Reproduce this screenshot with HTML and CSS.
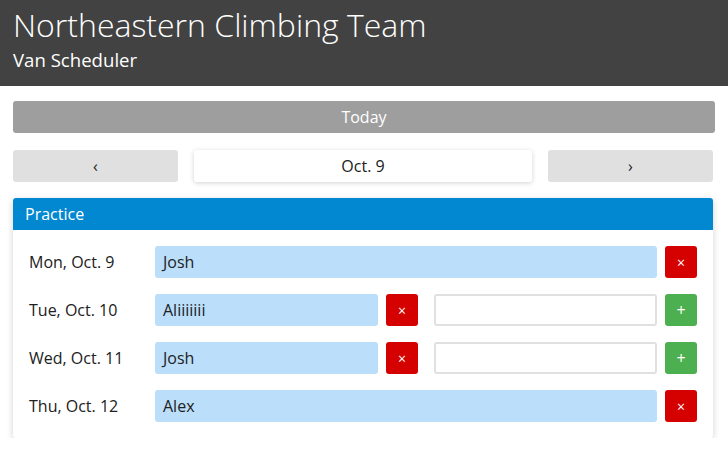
FILE: index.html
```html
<!DOCTYPE html>
<html>
<head>
<meta charset="utf-8">
<link rel="stylesheet" href="styles.css">
</head>
<body>
<header class="header">
  <h1 class="title">Northeastern Climbing Team</h1>
  <div class="subtitle">Van Scheduler</div>
</header>
<main class="main">
  <button class="today">Today</button>
  <div class="nav">
    <button class="nav-btn">‹</button>
    <div class="date">Oct. 9</div>
    <button class="nav-btn">›</button>
  </div>
  <section class="card">
    <div class="card-head">Practice</div>
    <div class="card-body">
      <div class="row">
        <div class="day">Mon, Oct. 9</div>
        <div class="slots">
          <div class="name">Josh</div>
          <button class="btn red">×</button>
        </div>
      </div>
      <div class="row">
        <div class="day">Tue, Oct. 10</div>
        <div class="slots">
          <div class="name">Aliiiiiii</div>
          <button class="btn red">×</button>
          <div class="empty"></div>
          <button class="btn green">+</button>
        </div>
      </div>
      <div class="row">
        <div class="day">Wed, Oct. 11</div>
        <div class="slots">
          <div class="name">Josh</div>
          <button class="btn red">×</button>
          <div class="empty"></div>
          <button class="btn green">+</button>
        </div>
      </div>
      <div class="row">
        <div class="day">Thu, Oct. 12</div>
        <div class="slots">
          <div class="name">Alex</div>
          <button class="btn red">×</button>
        </div>
      </div>
    </div>
  </section>
</main>
</body>
</html>
```
FILE: styles.css
```css
* { box-sizing: border-box; }
body {
  margin: 0;
  font-family: "Open Sans", sans-serif;
  background: #fff;
  color: #212121;
}
.header {
  background: #424242;
  color: #fff;
  height: 86px;
  padding: 4px 13px 0;
}
.title {
  margin: 0;
  font-weight: 300;
  font-size: 32px;
  line-height: 42px;
}
.subtitle {
  font-size: 18.6px;
  line-height: 28px;
}
.main {
  padding: 15px 13px 0 13px;
  display: flex;
  flex-direction: column;
}
button {
  font-family: inherit;
  border: none;
  cursor: pointer;
}
.today {
  height: 32px;
  width: 702px;
  background: #9e9e9e;
  color: #fff;
  font-size: 16px;
  border-radius: 3px;
}
.nav {
  margin-top: 17px;
  display: flex;
  gap: 16px;
  width: 700px;
}
.nav-btn {
  width: 165px;
  height: 32px;
  background: #e0e0e0;
  color: #212121;
  font-size: 16px;
  border-radius: 3px;
}
.date {
  flex: 1;
  height: 32px;
  background: #fff;
  border-radius: 3px;
  box-shadow: 0 1px 5px rgba(0,0,0,0.18);
  text-align: center;
  font-size: 16px;
  line-height: 32px;
}
.card {
  margin-top: 16px;
  width: 700px;
  border-radius: 3px;
  box-shadow: 0 2px 7px rgba(0,0,0,0.18);
  overflow: hidden;
}
.card-head {
  background: #0288d1;
  color: #fff;
  height: 32px;
  line-height: 32px;
  font-size: 16px;
  padding-left: 12px;
}
.card-body {
  padding: 16px;
  display: flex;
  flex-direction: column;
  gap: 16px;
}
.row {
  display: flex;
  align-items: center;
  gap: 16px;
  height: 32px;
}
.day {
  width: 110px;
  font-size: 16px;
}
.slots {
  display: flex;
  gap: 8px;
  width: 542px;
}
.name {
  flex: 1 1 0;
  height: 32px;
  background: #bbdefb;
  border-radius: 3px;
  font-size: 16px;
  line-height: 32px;
  padding-left: 8px;
}
.empty {
  flex: 1 1 0;
  margin-left: 8px;
  height: 32px;
  border: 2px solid #e0e0e0;
  padding-left: 4px;
  border-radius: 3px;
  background: #fff;
}
.btn {
  width: 32px;
  height: 32px;
  border-radius: 3px;
  color: #fff;
  font-size: 14px;
  padding: 0;
}
.red { background: #d50000; }
.green { background: #4caf50; font-size: 16px; }
```
